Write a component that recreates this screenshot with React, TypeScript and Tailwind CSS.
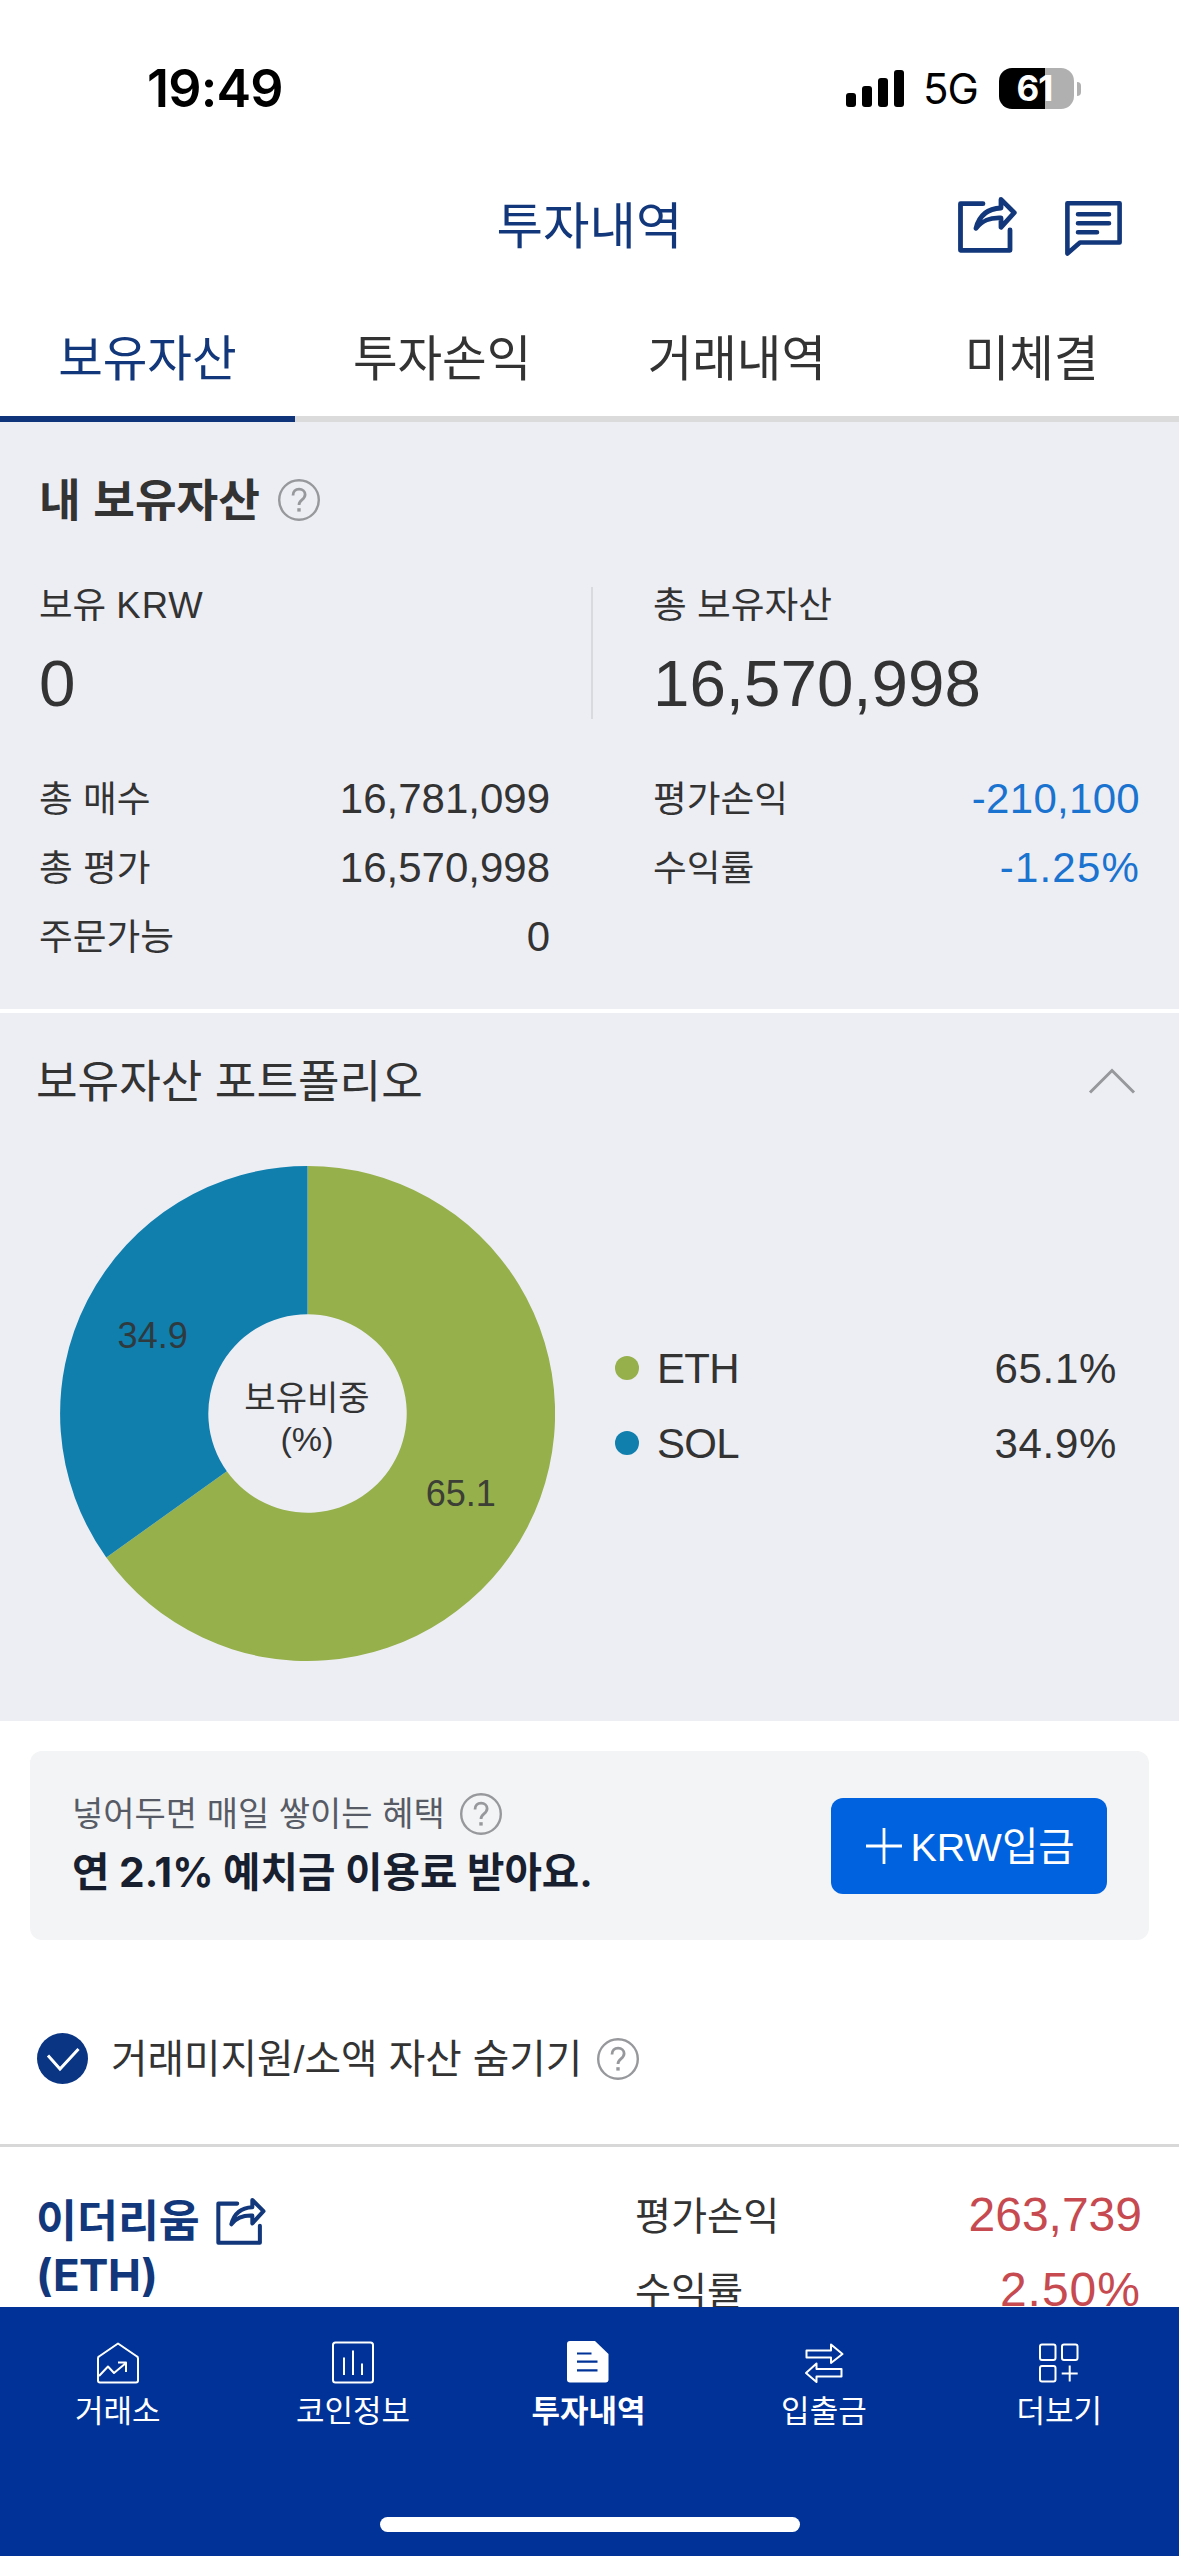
import type { ReactNode } from "react";
import clsx from "clsx";

const TABS = ["보유자산", "투자손익", "거래내역", "미체결"];

const TOTALS = [
    { label: "총 매수", value: "16,781,099" },
    { label: "총 평가", value: "16,570,998" },
    { label: "주문가능", value: "0" },
];

const PROFITS = [
    { label: "평가손익", value: "-210,100" },
    { label: "수익률", value: "-1.25%" },
];

const PORTFOLIO = [
    { symbol: "ETH", percent: "65.1%", dot: "bg-[#96b04c]" },
    { symbol: "SOL", percent: "34.9%", dot: "bg-[#107fae]" },
];

function HelpIcon({ className }: { className?: string }) {
    return (
        <svg viewBox="0 0 42 42" fill="none" stroke="#97989b" className={clsx("w-[42px] h-[42px] shrink-0", className)}>
            <circle cx="21" cy="21" r="19.800" strokeWidth="2.400" />
            <path d="M15 16.500c0-4 2.600-6.300 6.100-6.300 3.500 0 6 2.200 6 5.400 0 2.500-1.300 3.800-3.200 5.300-1.900 1.500-2.900 2.600-2.900 5.100" strokeWidth="2.800" />
            <path d="M21 29.200v3.400" strokeWidth="3.400" />
        </svg>
    );
}

function ShareIcon({ className }: { className?: string }) {
    return (
        <svg
            viewBox="18 17 59 56"
            fill="none"
            stroke="#12377b"
            strokeWidth="4.800"
            strokeLinecap="round"
            strokeLinejoin="round"
            className={className}
        >
            <path d="M43 23.700H20.500V70.300H70V50" />
            <path d="M36 48.300C39 36.500 46.500 28.500 61 28V19.400L74.300 32.700L61 47.300V38C50 37.500 42.500 40 36 48.300Z" />
        </svg>
    );
}

function ChatIcon() {
    return (
        <svg
            viewBox="125 22.500 57 55"
            fill="none"
            stroke="#12377b"
            strokeWidth="4.600"
            strokeLinecap="round"
            strokeLinejoin="round"
            className="w-[57px] h-[55px]"
        >
            <path d="M127.400 24.800H179.600V64H140L127.400 75Z" />
            <path d="M138 35.700H169M138 44.700H169M138 53.700H157" />
        </svg>
    );
}

function StatusBar() {
    return (
        <div className="flex h-[176px] items-center justify-between pl-[147px] pr-[98px] pt-[1px] text-black">
            <span className="font-['Inter'] text-[52px] leading-[52px] font-semibold tracking-[-0.8px]">19:49</span>
            <div className="flex items-center">
                <svg viewBox="0 0 58 38" className="w-[58px] h-[38px]">
                    <rect x="0" y="23" width="10" height="14" rx="3" />
                    <rect x="16" y="16" width="10" height="21" rx="3" />
                    <rect x="32" y="8" width="10" height="29" rx="3" />
                    <rect x="48" y="0" width="10" height="37" rx="3" />
                </svg>
                <span className="ml-[19px] w-[56px] font-['Inter'] text-[42px] leading-[42px] tracking-[-1px]">5G</span>
                <div className="ml-[20px] flex h-[41px] w-[75px] items-center justify-center rounded-[13px] bg-[linear-gradient(to_right,#000_61%,#b0b0b0_61%)] pr-[4px]">
                    <span className="font-['Inter'] text-[35px] leading-[41px] font-bold tracking-[-1px] text-white">61</span>
                </div>
                <div className="ml-[3px] h-[14px] w-[4px] rounded-r-full bg-[#b0b0b0]" />
            </div>
        </div>
    );
}

function TitleBar() {
    return (
        <header className="grid h-[98px] grid-cols-[1fr_auto_1fr] items-center">
            <span />
            <h1 className="pt-[4px] text-[50.500px] leading-[50px] text-[#12377b]">투자내역</h1>
            <div className="flex items-center justify-end gap-[48px] pr-[57px]">
                <ShareIcon className="w-[59px] h-[56px]" />
                <div className="pt-[6px]">
                    <ChatIcon />
                </div>
            </div>
        </header>
    );
}

function Tabs() {
    return (
        <nav className="grid h-[148px] grid-cols-4">
            {TABS.map((tab, i) => (
                <button
                    key={tab}
                    className={clsx(
                        "border-b-6 pt-[27px] text-center text-[48.500px] leading-[50px]",
                        i === 0 ? "border-[#0f347a] text-[#12377b]" : "border-[#dbdbdb] text-[#333]"
                    )}
                >
                    {tab}
                </button>
            ))}
        </nav>
    );
}

function AssetSummary() {
    return (
        <section className="h-[591px] border-b-4 border-white px-[39px] pt-[55px]">
            <div className="flex h-[46px] items-center gap-[18px]">
                <h2 className="pt-[4px] text-[45.300px] leading-[46px] font-bold">내 보유자산</h2>
                <HelpIcon />
            </div>

            <div className="mt-[64px] flex h-[132px]">
                <div className="w-[554px] border-r-2 border-[#d9dade]">
                    <p className="pt-px text-[36.500px] leading-[36px]">
                        보유 <span className="tracking-[1px]">KRW</span>
                    </p>
                    <p className="mt-[27px] text-[65.500px] leading-[66px]">0</p>
                </div>
                <div className="pl-[60px]">
                    <p className="pt-px text-[36.700px] leading-[36px]">총 보유자산</p>
                    <p className="mt-[27px] text-[65.500px] leading-[66px]">16,570,998</p>
                </div>
            </div>

            <div className="mt-[45px] flex justify-between">
                <dl className="w-[511px]">
                    {TOTALS.map((row) => (
                        <div key={row.label} className="flex h-[69px] items-center justify-between">
                            <dt className="pt-[2px] text-[36.700px] leading-[36px]">{row.label}</dt>
                            <dd className="pt-px text-[42px] leading-[42px]">{row.value}</dd>
                        </div>
                    ))}
                </dl>
                <dl className="w-[487px]">
                    {PROFITS.map((row) => (
                        <div key={row.label} className="flex h-[69px] items-center justify-between">
                            <dt className="pt-[2px] text-[36.700px] leading-[36px]">{row.label}</dt>
                            <dd
                                className={clsx(
                                    "pt-px text-[42px] leading-[42px] text-[#1b73d0]",
                                    row.value.endsWith("%") ? "tracking-[1.200px]" : "tracking-[0.300px]"
                                )}
                            >
                                {row.value}
                            </dd>
                        </div>
                    ))}
                </dl>
            </div>
        </section>
    );
}

function DonutChart() {
    return (
        <svg viewBox="0 0 494 494" className="w-[495px] h-[495px] shrink-0">
            {/* ETH 65.1% clockwise from the top, SOL takes the rest */}
            <path d="M247 0A247 247 0 1 1 46.200 390.700L166.500 304.600A99 99 0 1 0 247 148Z" fill="#96b04c" />
            <path d="M247 0A247 247 0 0 0 46.200 390.700L166.500 304.600A99 99 0 0 1 247 148Z" fill="#107fae" />
            <g textAnchor="middle" fontSize="36" fill="#333">
                <text x="92.500" y="181.500" opacity="0.9">34.9</text>
                <text x="400" y="339.500" opacity="0.9">65.1</text>
                <text x="246.500" y="244" fontSize="34">보유비중</text>
                <text x="246.500" y="284.500" fontSize="34">(%)</text>
            </g>
        </svg>
    );
}

function Portfolio() {
    return (
        <section className="h-[708px] pt-[45px]">
            <div className="flex h-[46px] items-center justify-between pl-[36px] pr-[43px]">
                <h2 className="pt-[4px] text-[45.200px] leading-[46px]">보유자산 포트폴리오</h2>
                <svg viewBox="0 0 48 28" fill="none" stroke="#97989b" strokeWidth="3" className="w-[48px] h-[28px]">
                    <path d="M2 25.500L24 3.500L46 25.500" />
                </svg>
            </div>
            <div className="mt-[62px] flex items-center pl-[60px] pr-[62px]">
                <DonutChart />
                <ul className="mb-[17px] ml-[60px] flex-1">
                    {PORTFOLIO.map((coin) => (
                        <li key={coin.symbol} className="flex h-[75px] items-center text-[42px] leading-[42px]">
                            <span className={clsx("mr-[18px] h-[24px] w-[24px] rounded-full", coin.dot)} />
                            <span className="flex-1 pt-[2px] tracking-[-0.700px]">{coin.symbol}</span>
                            <span className="pt-[2px] tracking-[0.700px]">{coin.percent}</span>
                        </li>
                    ))}
                </ul>
            </div>
        </section>
    );
}

function DepositBanner() {
    return (
        <section className="mx-[30px] mt-[30px] flex h-[189px] items-center justify-between rounded-[12px] bg-[#f3f4f6] pl-[42px] pr-[42px] font-['Inter','Noto_Sans_CJK_KR',sans-serif]">
            <div>
                <div className="flex h-[42px] items-center gap-[15px]">
                    <p className="text-[34px] leading-[42px] text-[#575b65]">넣어두면 매일 쌓이는 혜택</p>
                    <HelpIcon />
                </div>
                <p className="mt-[14px] mb-[2px] text-[40.700px] leading-[48px] font-bold text-[#18202f]">연 2.1% 예치금 이용료 받아요.</p>
            </div>
            <button className="flex h-[96px] w-[276px] items-center justify-center gap-[8px] rounded-[12px] bg-[#0062df] pl-[3px] font-['Liberation_Sans','Noto_Sans_CJK_KR',sans-serif] text-[39.500px] leading-[40px] text-white">
                <svg viewBox="0 0 36 36" stroke="white" strokeWidth="2.800" className="w-[36px] h-[36px]">
                    <path d="M18 0V36M0 18H36" />
                </svg>
                <span className="pt-[2px]">KRW입금</span>
            </button>
        </section>
    );
}

function HideSmallAssets() {
    return (
        <div className="mt-[93px] flex h-[51px] items-center pl-[37px]">
            <svg viewBox="0 0 51 51" fill="none" className="w-[51px] h-[51px]">
                <circle cx="25.500" cy="25.500" r="25.500" fill="#0a3583" />
                <path d="M11 22.500L23 36L41.500 16" stroke="white" strokeWidth="3" />
            </svg>
            <span className="ml-[23px] mr-[15px] pt-px text-[39.700px] leading-[40px]">거래미지원/소액 자산 숨기기</span>
            <HelpIcon />
        </div>
    );
}

function CoinRow() {
    return (
        <section className="mt-[60px] flex justify-between border-t-3 border-[#d8d8d8] pl-[36px] pr-[37px] pt-[44px]">
            <div className="text-[44.500px] leading-[58px] font-bold text-[#12377b]">
                <div className="flex items-center gap-[16px]">
                    <span className="pt-[2px]">이더리움</span>
                    <ShareIcon className="w-[50px] h-[47px]" />
                </div>
                <p className="mt-[-5px] font-['Inter'] text-[44px] leading-[58px] tracking-[-0.500px]">(ETH)</p>
            </div>
            <dl className="w-[507px] text-[39.200px]">
                <div className="flex h-[48px] items-center justify-between">
                    <dt className="pt-[3px] leading-[40px]">평가손익</dt>
                    <dd className="text-[48px] leading-[48px] text-[#c64a50]">263,739</dd>
                </div>
                <div className="mt-[27px] flex h-[48px] items-center justify-between">
                    <dt className="pt-[3px] leading-[40px]">수익률</dt>
                    <dd className="pr-px text-[48px] leading-[48px] tracking-[1px] text-[#c64a50]">2.50%</dd>
                </div>
            </dl>
        </section>
    );
}

function NavItem({ label, active, children }: { label: string; active?: boolean; children: ReactNode }) {
    return (
        <button className="flex flex-col items-center pt-[34px]">
            {children}
            <span className={clsx("mt-[11px] text-[31px] leading-[31px]", active && "font-bold")}>{label}</span>
        </button>
    );
}

function BottomNav() {
    const line = "w-[44px] h-[44px] fill-none stroke-current stroke-2";

    return (
        <footer className="flex h-[249px] shrink-0 flex-col bg-[#003297] text-white">
            <nav className="grid flex-1 grid-cols-5 pr-[2px]">
                <NavItem label="거래소">
                    <svg viewBox="0 0 44 44" className={line} strokeLinejoin="round">
                        <path d="M22 2.500L41 15.500Q42 16 42 17.500V39.500Q42 41.500 40 41.500H4Q2 41.500 2 39.500V17.500Q2 16 3 15.500Z" />
                        <path d="M3 35L12 25.500L18 32L30 22M22 21.500H30V31" />
                    </svg>
                </NavItem>
                <NavItem label="코인정보">
                    <svg viewBox="0 0 44 44" className={line}>
                        <rect x="2" y="1.500" width="40" height="40" rx="2.500" />
                        <path d="M13 16.500V34M22 9.500V34M31 22.500V34" />
                    </svg>
                </NavItem>
                <NavItem label="투자내역" active>
                    <svg viewBox="0 0 44 44" className="w-[44px] h-[44px]">
                        <path d="M4 0H29L42.500 13V38.500Q42.500 41.500 39.500 41.500H4Q1 41.500 1 38.500V3Q1 0 4 0Z" fill="white" />
                        <path d="M11 12.500H25.500M11 20.700H31.500M11 29.300H31.500" stroke="#003297" strokeWidth="2.200" />
                    </svg>
                </NavItem>
                <NavItem label="입출금">
                    <svg viewBox="0 0 44 44" className={line} strokeLinejoin="round">
                        <path d="M4.500 9.500H29V3.500L40.500 13L29 22V16.500H4.500Z" />
                        <path d="M39.500 28H14.500V22.500L4 32L14.500 41V35.500H39.500Z" />
                    </svg>
                </NavItem>
                <NavItem label="더보기">
                    <svg viewBox="0 0 44 44" className={line}>
                        <rect x="3" y="3.500" width="15.500" height="15.500" rx="2" />
                        <rect x="25" y="3.500" width="15.500" height="15.500" rx="2" />
                        <rect x="3" y="25" width="15.500" height="15.500" rx="2" />
                        <path d="M32.700 24.500V40.500M24.700 32.500H40.700" />
                    </svg>
                </NavItem>
            </nav>
            <div className="mx-auto mb-[24px] h-[15px] w-[420px] rounded-full bg-white" />
        </footer>
    );
}

export default function App() {
    return (
        <div className="flex h-[2556px] w-[1179px] flex-col overflow-hidden bg-white font-['Liberation_Sans','Noto_Sans_CJK_KR',sans-serif] text-[#333]">
            <StatusBar />
            <TitleBar />
            <Tabs />
            <main className="min-h-0 flex-1 overflow-hidden">
                <div className="bg-[#edeef4]">
                    <AssetSummary />
                    <Portfolio />
                </div>
                <DepositBanner />
                <HideSmallAssets />
                <CoinRow />
            </main>
            <BottomNav />
        </div>
    );
}
